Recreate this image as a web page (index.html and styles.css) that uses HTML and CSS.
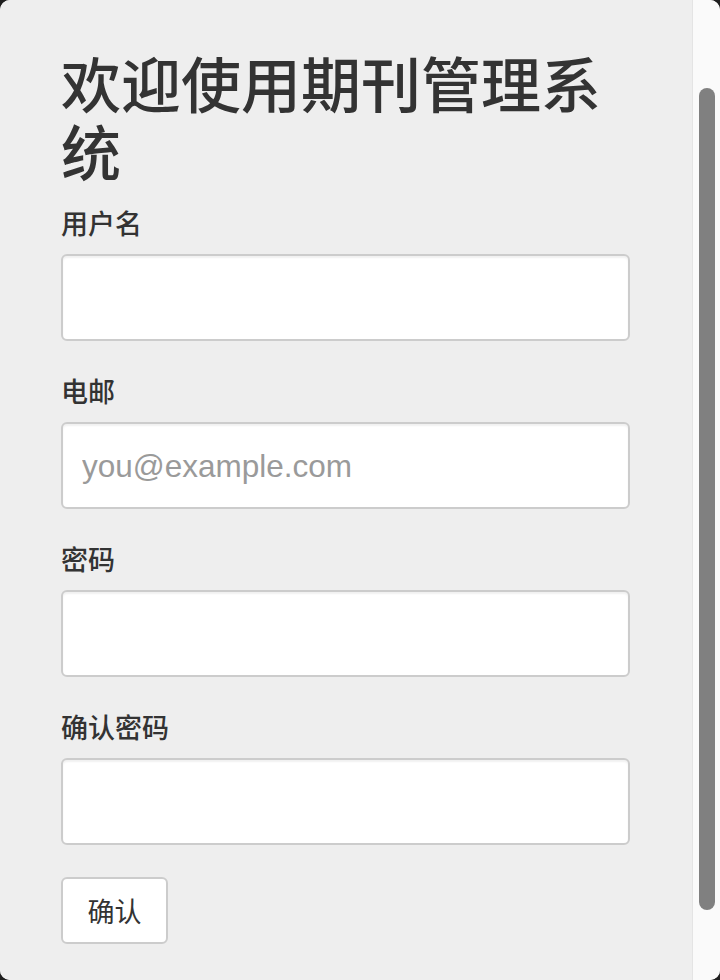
FILE: index.html
```html
<!DOCTYPE html>
<html lang="zh-CN">
<head>
<meta charset="utf-8">
<title>欢迎使用期刊管理系统</title>
<link rel="stylesheet" href="styles.css">
</head>
<body>
<div class="window">
  <main class="page">
    <h1 class="title">欢迎使用期刊管理系统</h1>
    <form class="form">
      <div class="field">
        <label class="label" for="username">用户名</label>
        <input class="input" id="username" type="text">
      </div>
      <div class="field">
        <label class="label" for="email">电邮</label>
        <input class="input" id="email" type="email" placeholder="you@example.com">
      </div>
      <div class="field">
        <label class="label" for="password">密码</label>
        <input class="input" id="password" type="password">
      </div>
      <div class="field">
        <label class="label" for="confirm">确认密码</label>
        <input class="input" id="confirm" type="password">
      </div>
      <button class="button" type="button">确认</button>
    </form>
  </main>
  <div class="rail"><div class="thumb"></div></div>
</div>
</body>
</html>
```

FILE: styles.css
```css
html {
  margin: 0;
  background: #1e1e1e;
}
body {
  margin: 0;
  height: 980px;
  overflow: hidden;
  font-family: "Noto Sans CJK SC", "Liberation Sans", sans-serif;
  color: #333;
}
.window {
  display: flex;
  height: 980px;
  border-radius: 10px;
  overflow: hidden;
  background: #eeeeee;
}
.page {
  flex: 1;
  padding: 48px 61px 0 61px;
  background: #eeeeee;
}
.title {
  margin: 0 0 24px 0;
  font-size: 60px;
  line-height: 68px;
  font-weight: 500;
  color: #333;
  width: 568px;
}
.form {
  display: flex;
  flex-direction: column;
  width: 569px;
}
.field {
  display: flex;
  flex-direction: column;
  margin-bottom: 35px;
}
.field:last-of-type {
  margin-bottom: 32px;
}
.label {
  font-size: 27px;
  line-height: 30px;
  font-weight: 500;
  color: #333;
  margin-bottom: 16px;
}
.input {
  box-sizing: border-box;
  height: 87px;
  width: 569px;
  border: 2px solid #cccccc;
  border-radius: 6px;
  background: #fff;
  box-shadow: inset 0 2px 2px rgba(0, 0, 0, 0.06);
  padding: 2px 19px 0 19px;
  font-family: "Liberation Sans", "Noto Sans CJK SC", sans-serif;
  font-size: 31.5px;
  color: #333;
  outline: none;
}
.input::placeholder {
  color: #9a9a9a;
}
.button {
  align-self: flex-start;
  box-sizing: border-box;
  width: 107px;
  height: 67px;
  border: 2px solid #cccccc;
  border-radius: 6px;
  background: #fff;
  font-family: "Noto Sans CJK SC", sans-serif;
  font-size: 27px;
  color: #333;
  padding: 0;
}
.rail {
  width: 28px;
  background: #fafafa;
  border-left: 1px solid #e4e4e4;
  padding-top: 88px;
  box-sizing: border-box;
}
.thumb {
  width: 16px;
  height: 822px;
  margin-left: 6px;
  border-radius: 8px;
  background: #808080;
}
```
